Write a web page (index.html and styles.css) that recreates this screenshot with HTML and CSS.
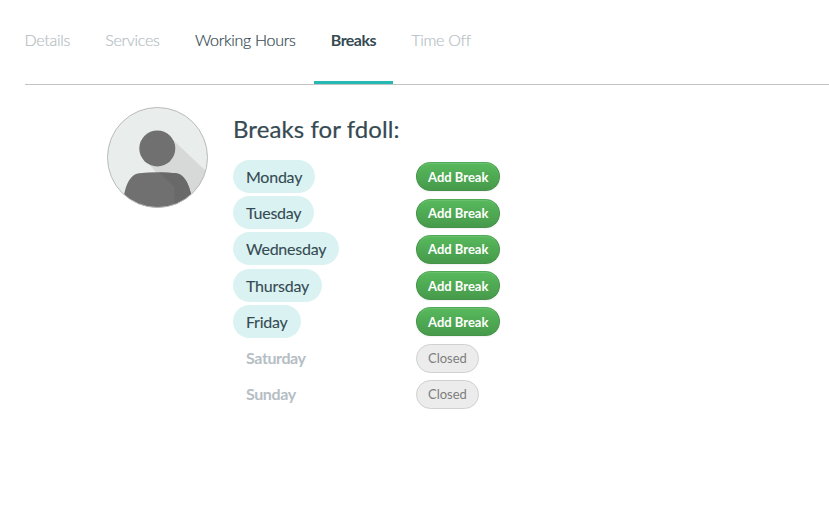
FILE: index.html
```html
<!DOCTYPE html>
<html lang="en">
<head>
<meta charset="utf-8">
<title>Breaks</title>
<link rel="stylesheet" href="styles.css">
</head>
<body>
<nav class="tabs">
  <a class="tab muted">Details</a>
  <a class="tab muted">Services</a>
  <a class="tab">Working Hours</a>
  <a class="tab active">Breaks</a>
  <a class="tab muted">Time Off</a>
</nav>
<main class="content">
  <svg class="avatar" viewBox="0 0 101 101" aria-hidden="true">
    <defs><clipPath id="round"><circle cx="50.5" cy="50.5" r="50"/></clipPath></defs>
    <g clip-path="url(#round)">
      <rect width="101" height="101" fill="#e9eeed"/>
      <path d="M66 33 101 66V101H78L42 57Z" fill="#d7d8d8"/>
      <circle cx="50.3" cy="41.4" r="18" fill="#707070"/>
      <path d="M15 101C17 85 20 68 32 66.200Q50 64.500 69 66.200C81 68 84 85 87 101Z" fill="#707070"/>
      <path d="M52 65.400Q60 65.300 69 66.200C81 68 84 85 87 101H67.500V80Z" fill="#696969"/>
    </g>
    <circle cx="50.500" cy="50.500" r="50" fill="none" stroke="#b9b9b9"/>
  </svg>
  <section class="schedule">
    <h1 class="title">Breaks for fdoll:</h1>
    <div class="row"><div class="cell"><span class="day">Monday</span></div><button class="btn">Add Break</button></div>
    <div class="row"><div class="cell"><span class="day">Tuesday</span></div><button class="btn">Add Break</button></div>
    <div class="row"><div class="cell"><span class="day">Wednesday</span></div><button class="btn">Add Break</button></div>
    <div class="row"><div class="cell"><span class="day">Thursday</span></div><button class="btn">Add Break</button></div>
    <div class="row"><div class="cell"><span class="day">Friday</span></div><button class="btn">Add Break</button></div>
    <div class="row"><div class="cell"><span class="day off">Saturday</span></div><button class="btn closed">Closed</button></div>
    <div class="row"><div class="cell"><span class="day off">Sunday</span></div><button class="btn closed">Closed</button></div>
  </section>
</main>
</body>
</html>
```
FILE: styles.css
```css
* { box-sizing: border-box; }
body {
  margin: 0;
  background: #fff;
  color: #364a52;
  font-family: Lato, "Liberation Sans", sans-serif;
}
.tabs {
  display: flex;
  gap: 1.4px;
  height: 85px;
  margin-left: 25px;
  border-bottom: 1px solid #c3c3c3;
}
.tab {
  height: 84px;
  padding: 30px 17px 0;
  border-bottom: 3px solid transparent;
  font-size: 16px;
  font-weight: 300;
  letter-spacing: -0.3px;
  line-height: 20px;
  white-space: nowrap;
  -webkit-text-stroke: 0.2px;
}
.tab:first-child { padding-left: 0; text-indent: -0.5px; }
.tab.muted { color: #b5bec4; }
.tab.active {
  border-bottom-color: #26b9b4;
  font-weight: 700;
  letter-spacing: -0.55px;
  -webkit-text-stroke: 0;
}
.content { display: flex; padding: 22px 0 0 107px; }
.avatar { width: 101px; height: 101px; margin-right: 25px; }
.schedule { width: 400px; }
.title {
  margin: 6px 0 15.95px;
  font-size: 24px;
  font-weight: 400;
  letter-spacing: 0.08px;
  line-height: 31px;
  -webkit-text-stroke: 0.2px;
}
.row {
  display: grid;
  grid-template-columns: 183px auto;
  justify-content: start;
  align-items: start;
  height: 36.25px;
}
.day {
  display: inline-block;
  height: 33px;
  padding: 0 13px;
  border-radius: 17px;
  background: #daf3f2;
  font-size: 16px;
  letter-spacing: -0.24px;
  line-height: 34px;
  -webkit-text-stroke: 0.1px;
}
.day.off {
  background: none;
  color: #b5bec4;
  font-weight: 700;
  letter-spacing: -0.4px;
  -webkit-text-stroke: 0;
}
.btn {
  height: 29px;
  margin: 2.35px 0 0;
  padding: 0 11px;
  border: 1px solid #45934a;
  border-top-color: #51aa55;
  border-radius: 15px;
  background: linear-gradient(#58b95c, #469a4a);
  box-shadow: inset 0 1px 0 #6bc070, 0 1px 2px rgba(0, 0, 0, .06);
  color: #fff;
  font-family: inherit;
  font-size: 13px;
  font-weight: 700;
  line-height: 26px;
}
.btn.closed {
  border-color: #d0d0d0;
  background: #ececec;
  box-shadow: none;
  color: #7d7d7d;
  font-weight: 400;
}
```
